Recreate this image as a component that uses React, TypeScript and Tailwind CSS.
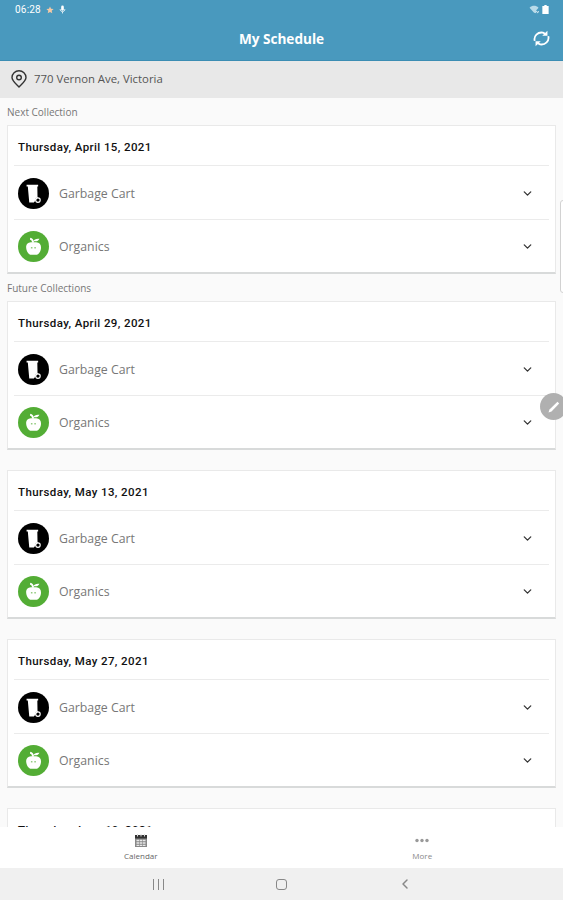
import type { ReactNode } from 'react'
import { ChevronDown, ChevronLeft } from 'lucide-react'

const collections = [
  'Thursday, April 29, 2021',
  'Thursday, May 13, 2021',
  'Thursday, May 27, 2021',
  'Thursday, June 10, 2021',
]

function CartIcon() {
  return (
    <svg viewBox="0 0 30 30" className="size-[31px] shrink-0">
      <circle cx="15" cy="15" r="15" fill="#000" />
      <path d="M8.3 6.600h11.200v1.700h-.8l.2 10.700h-1.500l-2 4.700h-4.500L9.500 8.300H8.300z" fill="#fff" />
      <circle cx="19.300" cy="21.400" r="2.200" fill="#000" stroke="#fff" strokeWidth="1.100" />
      <path d="M15.500 22.800l3.300-4.300" stroke="#fff" strokeWidth="1" />
    </svg>
  )
}

function AppleIcon() {
  return (
    <svg viewBox="0 0 30 30" className="size-[31px] shrink-0">
      <circle cx="15" cy="15" r="15" fill="#53ad35" />
      <path
        d="M12.500 10.800c-3 .2-4.800 2.200-4.600 5.200.2 3.600 2.300 7 5 7.100h4.500c2.800-.1 4.800-3.500 4.900-7.100.1-3-1.700-5-4.700-5.200z"
        fill="#fff"
      />
      <path d="M14.800 9.800c.8-1.900 3-2.700 6-2.300-.8 2-3 2.900-6 2.300z" fill="#fff" />
      <path d="M11.700 7.300c1.700.3 2.700 1.500 3 4" fill="none" stroke="#fff" strokeWidth="1.800" />
      <path d="M12.500 16.300h1.500M15.800 16.300h1.500" stroke="#53ad35" strokeWidth="0.900" />
    </svg>
  )
}

function Row({ label, icon }: { label: string; icon: ReactNode }) {
  return (
    <div className="mx-[6px] flex h-[53.500px] items-center border-t border-[#ebebeb] pl-[4px] pr-[15px] pt-[2px]">
      {icon}
      <span className="ml-[10px] flex-1 pt-px text-[12.300px] text-[#777]">{label}</span>
      <ChevronDown size={13} strokeWidth={2.400} className="text-[#333]" />
    </div>
  )
}

function CollectionCard({ date }: { date: string }) {
  return (
    <section className="h-[149px] shrink-0 border border-b-2 border-[#e9e9e9] border-b-[#d8dada] bg-white">
      <h2 className="flex h-[39px] items-center pl-[10px] pt-[4px] font-[Roboto] text-[11.500px] font-medium tracking-[0.400px] text-[#111]">
        {date}
      </h2>
      <Row label="Garbage Cart" icon={<CartIcon />} />
      <Row label="Organics" icon={<AppleIcon />} />
    </section>
  )
}

function Header() {
  return (
    <header className="h-[61px] border-b border-[#3b8db3] bg-[#4999be] text-white">
      <div className="flex h-[19px] items-center pl-[15px] pr-[14px]">
        <span className="font-[Roboto] text-[10px] tracking-[0.200px]">06:28</span>
        <svg viewBox="0 0 10 10" className="ml-[5px] size-[8px]">
          <path d="M5 .5l1.300 3 3.200.3-2.400 2.100.8 3.200L5 7.400 2.100 9.100l.8-3.200L.5 3.800l3.200-.3z" fill="#f4c9a5" />
        </svg>
        <svg viewBox="0 0 8 10" className="ml-[5px] h-[9px] w-[7px]">
          <rect x="2.500" y="0.500" width="3" height="6" rx="1.500" fill="#fff" />
          <path d="M1.300 4.500c0 4 5.400 4 5.400 0M4 7.500v2" fill="none" stroke="#fff" strokeWidth="0.900" />
        </svg>
        <svg viewBox="0 0 12 10" className="ml-auto h-[9px] w-[11px]">
          <path d="M.5 3C3.500.2 7.500.2 10.500 3L7.800 6 8 9.200 5.500 8.500z" fill="#b9dbe9" />
          <path d="M8 6.500l1.500 2 1.500-1.500" fill="none" stroke="#fff" />
        </svg>
        <svg viewBox="0 0 7 10" className="ml-[2px] h-[9px] w-[7px]">
          <path d="M2.200 0h2.600v1.200H7V10H0V1.200h2.200z" fill="#fff" />
        </svg>
      </div>
      <div className="relative flex h-[41px] items-center justify-center">
        <h1 className="text-[13.600px] font-bold">My Schedule</h1>
        <svg viewBox="0 0 18 18" className="absolute right-[13px] top-[11px] size-[17px]" fill="none" stroke="#fff" strokeWidth="1.900">
          <path d="M1.800 11.500C.5 6.500 5 1.800 10.500 2.800l3 1.500" />
          <path d="M16.200 6.500c1.300 5-3.200 9.700-8.700 8.700l-3-1.500" />
          <path d="M15.300.8v5.400H9.800z" fill="#fff" stroke="none" />
          <path d="M2.700 17.200v-5.400h5.500z" fill="#fff" stroke="none" />
        </svg>
      </div>
    </header>
  )
}

export default function App() {
  return (
    <div className="relative flex h-[900px] w-full flex-col overflow-hidden bg-[#fafafa] font-['Open_Sans',sans-serif]">
      <Header />
      <div className="flex h-[37px] shrink-0 items-center bg-[#e8e8e8] pb-[1px] pl-[11px]">
        <svg viewBox="0 0 16 18" className="h-[18px] w-[16px]" fill="none" stroke="#333" strokeWidth="1.400">
          <path d="M8 17C4.500 13.500 1 10.800 1 7.500a7 6.700 0 0 1 14 0c0 3.300-3.500 6-7 9.500z" />
          <circle cx="8" cy="7.500" r="2.300" />
        </svg>
        <span className="ml-[7px] text-[11.350px] font-medium text-[#555]">770 Vernon Ave, Victoria</span>
      </div>

      <main className="flex min-h-0 flex-1 flex-col overflow-hidden px-[7px]">
        <p className="flex h-[27px] shrink-0 items-center pt-[2px] text-[10px] text-[#777]">Next Collection</p>
        <CollectionCard date="Thursday, April 15, 2021" />
        <p className="flex h-[27px] shrink-0 items-center pt-[2px] text-[10px] text-[#777]">Future Collections</p>
        <div className="flex flex-col gap-[20px]">
          {collections.map((date) => (
            <CollectionCard key={date} date={date} />
          ))}
        </div>
      </main>

      <nav className="grid h-[41px] shrink-0 grid-cols-2 bg-white text-[8px]">
        <div className="flex flex-col items-center pt-[7px] text-[#666]">
          <svg viewBox="0 0 12 13" className="h-[13px] w-[12px]">
            <path d="M0 1h12v12H0z" fill="#888" />
            <path d="M0 1h12v3.500H0z" fill="#333" />
            <path d="M2.500 0v2.500M6 0v2.500M9.500 0v2.500" stroke="#ddd" />
            <path d="M1.500 6.500h9M1.500 9h9M1.500 11.300h9" stroke="#e8e8e8" strokeWidth="1.300" strokeDasharray="2.600 .6" />
          </svg>
          <span className="mt-[3px] leading-[11px]">Calendar</span>
        </div>
        <div className="flex flex-col items-center pt-[7px] text-[#888]">
          <svg viewBox="0 0 14 13" className="h-[13px] w-[14px]" fill="#999">
            <circle cx="2" cy="6.500" r="1.700" />
            <circle cx="7" cy="6.500" r="1.700" />
            <circle cx="12" cy="6.500" r="1.700" />
          </svg>
          <span className="mt-[3px] leading-[11px]">More</span>
        </div>
      </nav>

      <footer className="flex h-[32px] shrink-0 items-center justify-center gap-[112px] bg-[#f0f0f0] pl-[3px] text-[#888]">
        <div className="flex w-[11px] justify-between">
          <i className="h-[11px] w-px bg-[#888]" />
          <i className="h-[11px] w-px bg-[#888]" />
          <i className="h-[11px] w-px bg-[#888]" />
        </div>
        <div className="h-[11px] w-[11px] rounded-[3px] border-[1.500px] border-[#888]" />
        <ChevronLeft size={16} strokeWidth={2.200} className="-ml-[2px]" />
      </footer>

      {/* edge panel handle */}
      <div className="absolute right-[-5px] top-[200px] h-[93px] w-[8px] rounded-[3px] border border-[#d2d2d2] bg-white" />
      <div className="absolute right-[-4px] top-[393px] flex size-[27px] items-center justify-center rounded-full bg-[#b0b0b0]">
        <svg viewBox="0 0 12 12" className="size-[12px]">
          <path d="M.5 11.500l1-3L9.500.8l1.700 1.700L3.500 10.500z" fill="#fff" />
        </svg>
      </div>
    </div>
  )
}
